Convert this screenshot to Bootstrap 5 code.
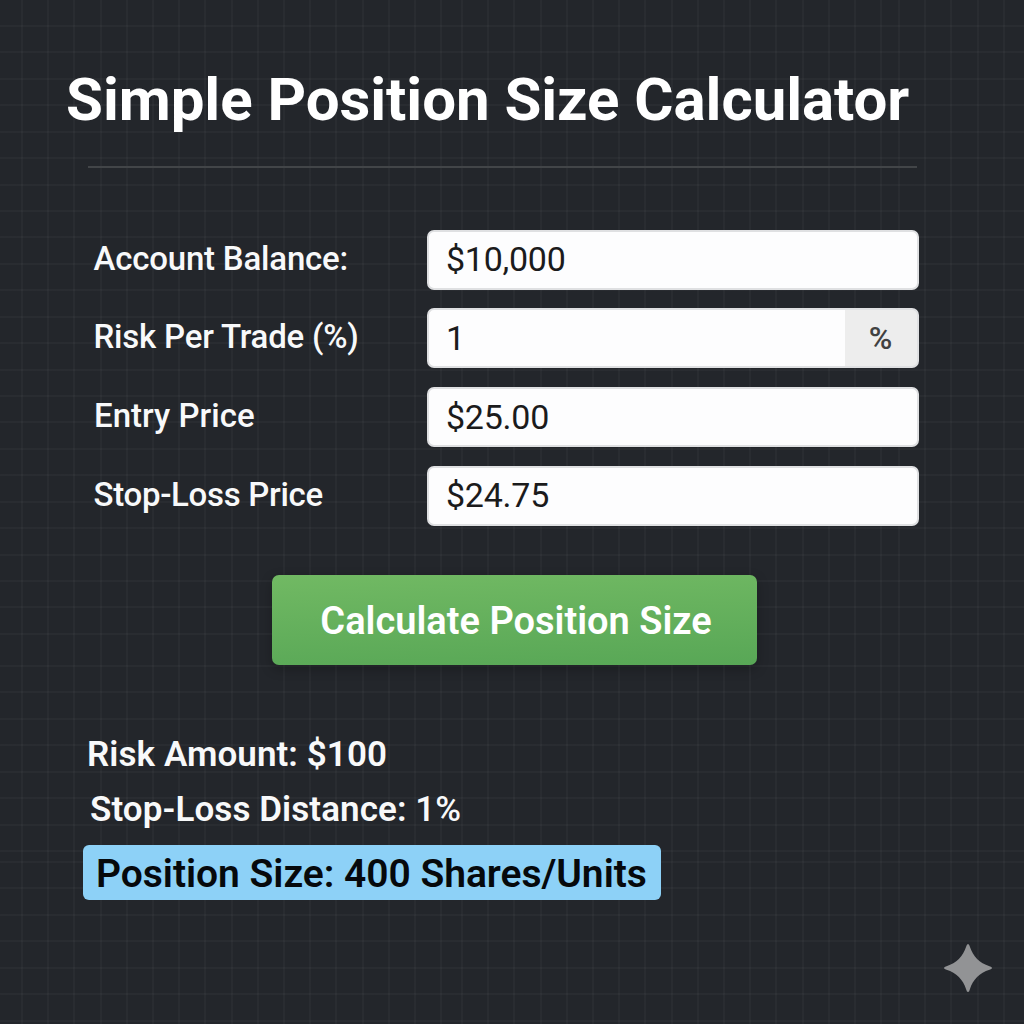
<!DOCTYPE html>
<html lang="en">
<head>
<meta charset="utf-8">
<meta name="viewport" content="width=device-width, initial-scale=1">
<title>Simple Position Size Calculator</title>
<link href="https://cdn.jsdelivr.net/npm/bootstrap@5.3.0/dist/css/bootstrap.min.css" rel="stylesheet">
<style>
  body {
    --grid-line: rgba(255, 255, 255, .028);
    --cols: repeating-linear-gradient(90deg, var(--grid-line) 0 2px, transparent 2px 26.2px);
    --rows: repeating-linear-gradient(180deg, var(--grid-line) 0 2px, transparent 2px 26.43px);
    width: 1024px; height: 1024px; overflow: hidden;
    font-family: Roboto, "Liberation Sans", sans-serif;
    color: #f8f9fa;
    background-color: #23262b;
    background-image: var(--cols), var(--cols), var(--cols), var(--rows), var(--rows), var(--rows);
    background-repeat: no-repeat;
    background-size: 430px 100%, 432px 100%, 130px 100%, 100% 630px, 100% 190px, 100% 170px;
    background-position: 21px 0, 461px 0, 898px 0, 0 25px, 0 665px, 0 861px;
  }
  .calc { padding: 65px 105px 0 83px; }
  .calc-title { font-size: 60px; line-height: 70px; margin: 0 0 0 -17px; letter-spacing: -.05px; }
  .calc-rule { height: 2px; margin: 31px 2px 61.500px 5px; background: #424548; }
  .calc-row { height: 60px; margin-bottom: 18.8px; }
  .calc-label { flex: 0 0 344px; padding: 0 0 2px 10.500px; font-size: 33px; line-height: 40px; font-weight: 500; letter-spacing: -.2px; }
  .label-entry { letter-spacing: .02px; padding-left: 11px; }
  .label-stop { letter-spacing: -.3px; }
  .calc-row .form-control, .calc-row .input-group-text { border: 2px solid #dfe0e2; border-radius: 7px; height: 60px; }
  .calc-row .form-control { padding: 0 17px 1px; font-size: 34px; letter-spacing: -.25px; color: #1b1b1c; background: #fdfdfe; }
  .calc-row .input-group .form-control { border-right: 0; }
  .calc-row .input-group-text { width: 75px; border-left: 0; background: #ededed; color: #414141; font-size: 32px; font-weight: 500; }
  .btn-calc { width: 485px; height: 90px; margin: 49.500px 0 0 189px; padding: 2px 0 0 3px; border: 0; border-radius: 7px;
    font-size: 38px; font-weight: 600; color: #fff; background: linear-gradient(178deg, #71b963, #58a756);
    box-shadow: 0 4px 12px rgba(0, 0, 0, .25); }
  .btn-calc:hover { color: #fff; }
  .results { padding-top: 69px; }
  .result-line { font-size: 35px; line-height: 42px; font-weight: 600; letter-spacing: .08px; }
  .result-line + .result-line { margin-top: 13px; padding-left: 7px; }
  .result-size { width: 578px; height: 55px; margin-top: 14px; padding: 3px 0 0 13px; border-radius: 6px; background: #8dd1f7; color: #06090c;
    font-size: 39px; font-weight: 600; letter-spacing: -.03px; }
  .sparkle { right: 31px; bottom: 31px; }
</style>
</head>
<body class="position-relative">
<main class="calc">
  <h1 class="calc-title fw-bold text-nowrap text-white">Simple Position Size Calculator</h1>
  <div class="calc-rule"></div>
  <form>
    <div class="calc-row d-flex align-items-center">
      <label class="calc-label text-nowrap" for="balance">Account Balance:</label>
      <input class="form-control" id="balance" type="text" value="$10,000">
    </div>
    <div class="calc-row d-flex align-items-center">
      <label class="calc-label text-nowrap" for="risk">Risk Per Trade (%)</label>
      <div class="input-group">
        <input class="form-control" id="risk" type="text" value="1">
        <span class="input-group-text justify-content-center">%</span>
      </div>
    </div>
    <div class="calc-row d-flex align-items-center">
      <label class="calc-label label-entry text-nowrap" for="entry">Entry Price</label>
      <input class="form-control" id="entry" type="text" value="$25.00">
    </div>
    <div class="calc-row d-flex align-items-center">
      <label class="calc-label label-stop text-nowrap" for="stop">Stop-Loss Price</label>
      <input class="form-control" id="stop" type="text" value="$24.75">
    </div>
    <button class="btn btn-calc d-block" type="button">Calculate Position Size</button>
  </form>
  <section class="results">
    <div class="result-line ps-1">Risk Amount: $100</div>
    <div class="result-line">Stop-Loss Distance: <span class="fw-medium">1%</span></div>
    <div class="result-size d-flex align-items-center text-nowrap">Position Size: 400 Shares/Units</div>
  </section>
</main>
<svg class="sparkle position-absolute" width="50" height="50" viewBox="0 0 50 50" aria-hidden="true">
  <path d="M25 1Q26.200 1 26.800 3.500C30 13.500 36.500 20 46.500 23.200Q49 23.800 49 25Q49 26.200 46.500 26.800C36.500 30 30 36.500 26.800 46.500Q26.200 49 25 49Q23.800 49 23.200 46.500C20 36.500 13.500 30 3.500 26.800Q1 26.200 1 25Q1 23.800 3.500 23.200C13.500 20 20 13.500 23.200 3.500Q23.800 1 25 1Z" fill="#929395"/>
</svg>
<script src="https://cdn.jsdelivr.net/npm/bootstrap@5.3.0/dist/js/bootstrap.bundle.min.js"></script>
</body>
</html>
